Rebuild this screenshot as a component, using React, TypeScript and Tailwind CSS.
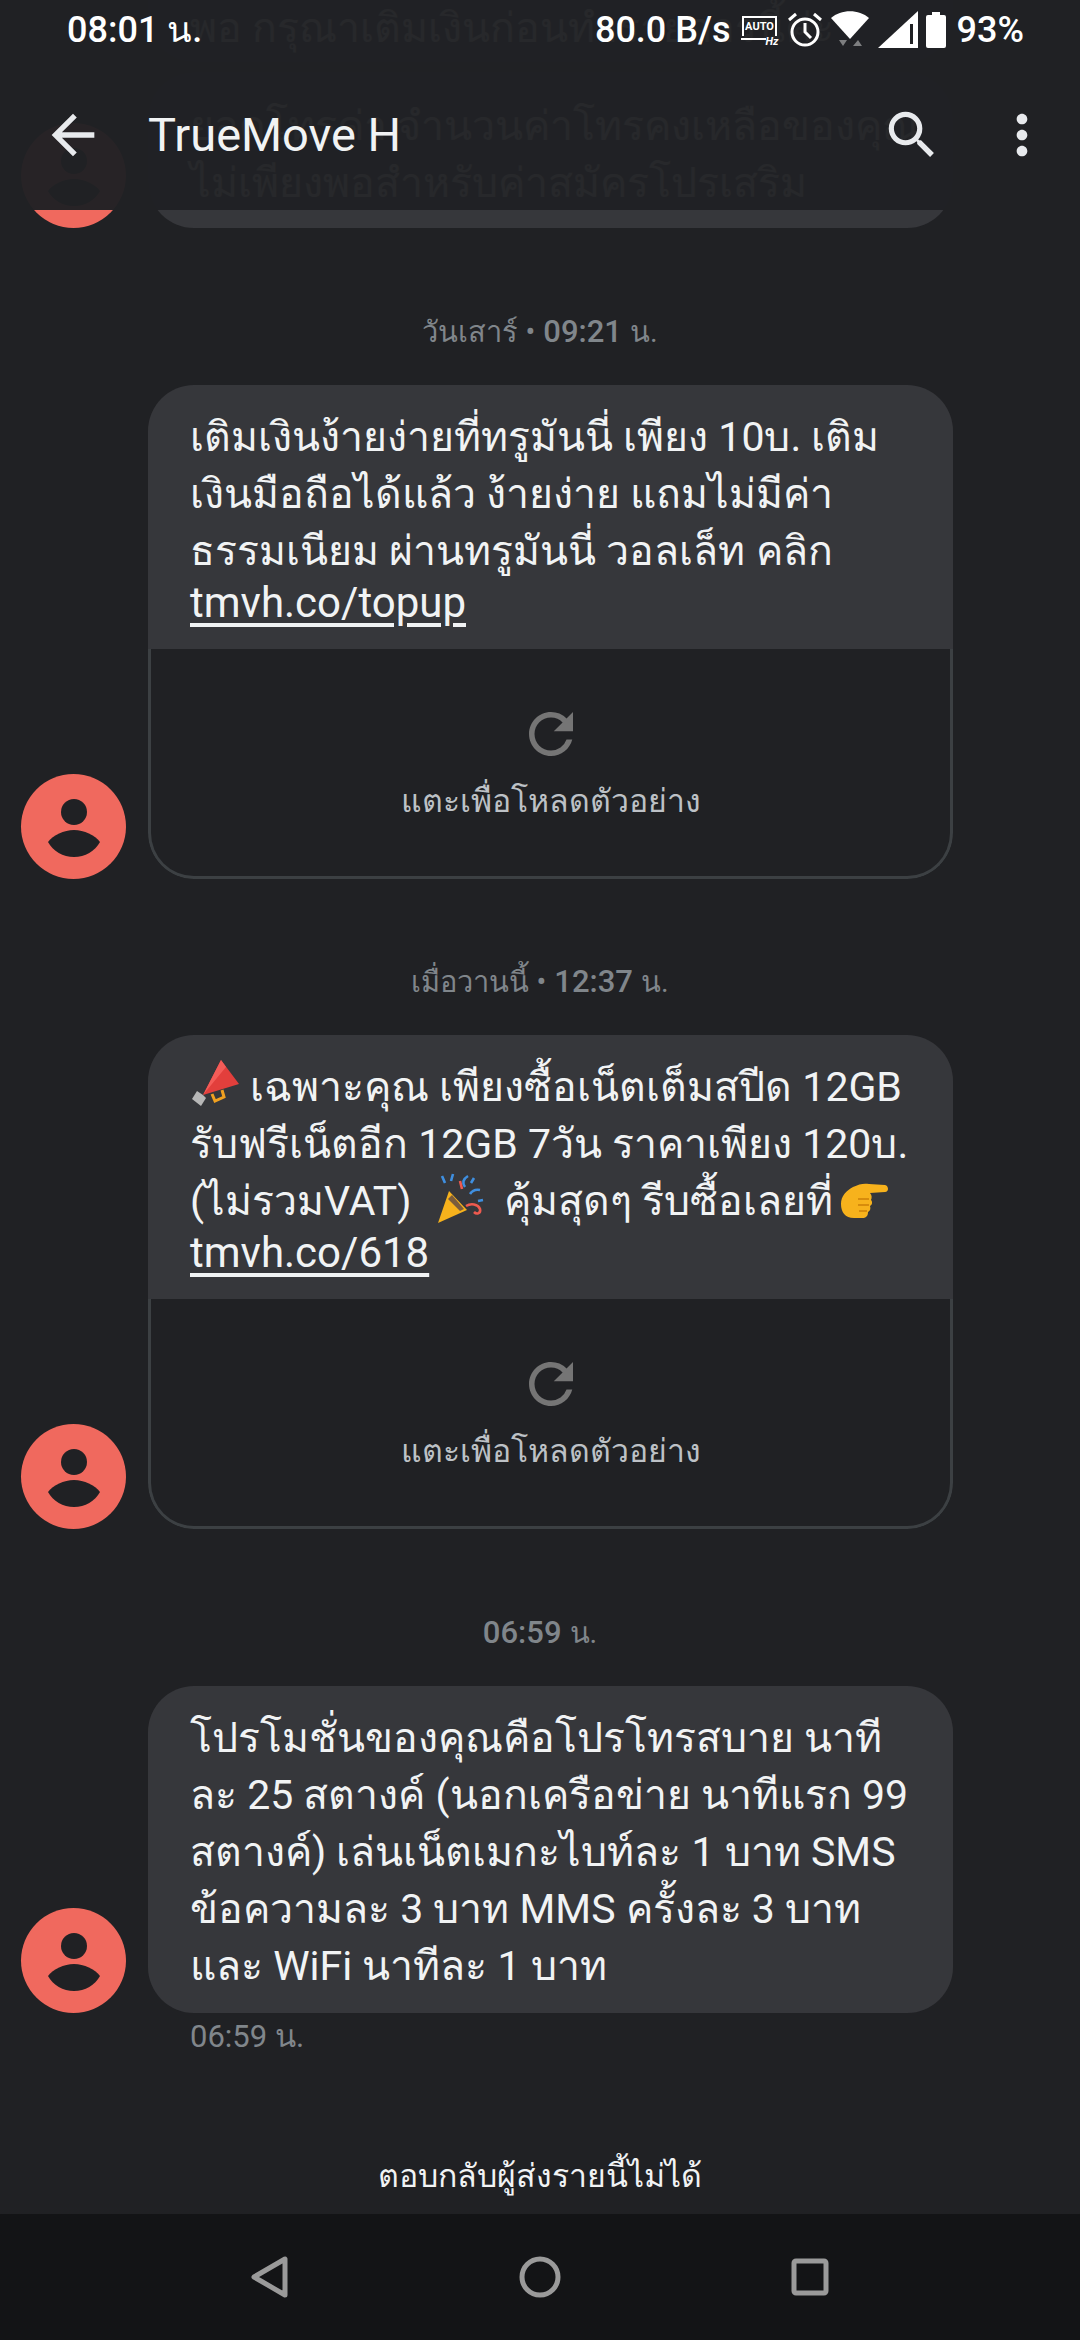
import { MdArrowBack, MdMoreVert, MdRefresh, MdSearch } from "react-icons/md";

function Avatar() {
  return (
    <div className="w-[105px] h-[105px] rounded-full bg-[#f0695e] shrink-0 flex flex-col items-center justify-center">
      <svg width="64" height="64" viewBox="0 0 64 64" fill="#202124">
        <circle cx="32" cy="17" r="13" />
        <path d="M32 35c-10 0-21 5-26 12 5 9 15 15 26 15s21-6 26-15c-5-7-16-12-26-12z" />
      </svg>
    </div>
  );
}

function Stamp({ label, time }: { label?: string; time: string }) {
  return (
    <div className="h-[57px] flex items-center justify-center text-[29px] text-[#80868b]">
      {label && <span className="mr-[8px]">{label} •</span>}
      <span className="font-medium text-[31px]">{time}</span>
      <span className="ml-[8px]">น.</span>
    </div>
  );
}

function Preview() {
  return (
    <div className="h-[230px] border-[3px] border-t-0 border-[#3c4043] rounded-b-[46px] flex flex-col items-center pt-[52px]">
      <MdRefresh size={66} className="text-[#757575]" />
      <div className="mt-[12px] text-[32px] leading-[44px] text-[#bdc1c6]">แตะเพื่อโหลดตัวอย่าง</div>
    </div>
  );
}

function Megaphone() {
  return (
    <svg width="50" height="50" viewBox="0 0 50 50" className="inline-block align-[-8px] mr-[10px]">
      <path d="M31 1 49 25 13 36z" fill="#e23f3c" />
      <path d="M31 1 36 8 17 31 13 36z" fill="#f45c58" />
      <path d="M13 36 7 32 2 40l9 7 5-8z" fill="#b7b7b7" />
      <path d="M22 35l3 7 9-4-2-7" fill="none" stroke="#f0a020" strokeWidth="3" />
    </svg>
  );
}

function Popper() {
  return (
    <svg width="50" height="52" viewBox="0 0 50 52" className="inline-block align-[-10px] ml-[24px] mr-[18px]">
      <path d="M13 18 31 37 2 50z" fill="#f7b21c" />
      <path d="M16 22l-4 4 12 12 4-2z" fill="#7a5c3c" />
      <path d="M6 3l3 7M17 1l-2 7M32 3c-5 3-6 7-3 11M44 17c-5-1-8 1-10 4M38 5l-3 5M47 27l-5 1" fill="none" stroke="#3f8fe0" strokeWidth="2.6" />
      <path d="M24 8l2 8M30 33c5-3 12-2 14 3 1 4-3 6-6 3" fill="none" stroke="#ee5a4f" strokeWidth="2.6" />
    </svg>
  );
}

function PointingHand() {
  return (
    <svg width="50" height="38" viewBox="0 0 50 38" className="inline-block align-[-4px] ml-[6px]">
      <path d="M14 6c6-3 11-4 16-3l16 1c4 1 4 7 0 7l-15 1c2 2 2 5 1 7 2 2 1 5-1 6 1 3 0 5-2 6 0 4-2 6-6 6h-8C6 37 2 31 2 23 2 15 7 10 14 6z" fill="#f7b21c" />
      <path d="M30 18H19M30 24H19M28 30H20" stroke="#d78c0c" strokeWidth="2" fill="none" />
    </svg>
  );
}

function AutoHz() {
  return (
    <svg width="40" height="34" viewBox="0 0 40 34" fill="none" className="shrink-0">
      <path d="M3 23V4h33v19M1 26h25" stroke="white" strokeWidth="2" />
      <text x="19.5" y="17" textAnchor="middle" fontSize="11" fontWeight="700" fill="white">AUTO</text>
      <text x="32" y="32" textAnchor="middle" fontSize="11" fontWeight="700" fontStyle="italic" fill="white">Hz</text>
    </svg>
  );
}

function Alarm() {
  return (
    <svg width="36" height="36" viewBox="0 0 36 36" fill="none" stroke="white" strokeWidth="3" className="shrink-0">
      <circle cx="18" cy="20" r="13" />
      <path d="M18 11v9l6 6M2 8l7-6M34 8l-7-6" />
    </svg>
  );
}

function Wifi() {
  return (
    <svg width="40" height="40" viewBox="0 0 40 40" className="shrink-0">
      <path d="M1 8C11-1 29-1 39 8L20 29z" fill="white" />
      <path d="M9 30h8l-4 6zM23 36h9l-4-6z" fill="#7d7e80" />
    </svg>
  );
}

function Signal() {
  return (
    <svg width="42" height="40" viewBox="0 0 42 40" className="shrink-0">
      <path d="M41 1v37H1z" fill="white" />
      <path d="M33 14h3v20h-3z" fill="#202124" />
    </svg>
  );
}

function Battery() {
  return (
    <svg width="20" height="36" viewBox="0 0 20 36" className="shrink-0">
      <path d="M6 0h8v3h4a2 2 0 0 1 2 2v29a2 2 0 0 1-2 2H2a2 2 0 0 1-2-2V5a2 2 0 0 1 2-2h4z" fill="white" />
    </svg>
  );
}

function Bubble({ children, preview }: { children: React.ReactNode; preview?: boolean }) {
  return (
    <div className="flex items-end pl-[21px]">
      <Avatar />
      <div className="ml-[22px] w-[805px] rounded-[46px] overflow-hidden">
        <div className="bg-[#36373b] pl-[42px] pt-[24px] pb-[18px] text-[41px] leading-[57px] text-[#f1f3f4] whitespace-nowrap">
          {children}
        </div>
        {preview && <Preview />}
      </div>
    </div>
  );
}

function LinkLine({ children }: { children: React.ReactNode }) {
  return <div className="mb-[6px] text-[42px] leading-[45px] underline underline-offset-[6px]">{children}</div>;
}

export default function App() {
  return (
    <div className="relative w-[1080px] h-[2340px] overflow-hidden bg-[#202124] font-['Roboto','Noto_Sans',sans-serif] flex flex-col">
      <main className="flex-1 overflow-hidden">
        <div className="-mt-[42px] ml-[148px] w-[805px] h-[104px] pl-[42px] pt-[42px] bg-[#36373b] rounded-b-[46px] text-[41px] leading-[57px] text-[#f1f3f4] whitespace-nowrap">
          พอ กรุณาเติมเงินก่อนทำรายการนี้ค่ะ
        </div>
        <div className="mt-[10px] flex items-end pl-[21px]">
          <Avatar />
          <div className="ml-[22px] w-[805px] h-[156px] rounded-[46px] bg-[#36373b] pl-[42px] pt-[26px] text-[41px] leading-[57px] text-[#f1f3f4] whitespace-nowrap">
            <div>ยอดโทรค่า จำนวนค่าโทรคงเหลือของคุณ</div>
            <div>ไม่เพียงพอสำหรับค่าสมัครโปรเสริม</div>
          </div>
        </div>

        <div className="mt-[76px]"><Stamp label="วันเสาร์" time="09:21" /></div>
        <div className="mt-[24px]">
          <Bubble preview>
            <div>เติมเงินง้ายง่ายที่ทรูมันนี่ เพียง 10บ. เติม</div>
            <div>เงินมือถือได้แล้ว ง้ายง่าย แถมไม่มีค่า</div>
            <div>ธรรมเนียม ผ่านทรูมันนี่ วอลเล็ท คลิก</div>
            <LinkLine>tmvh.co/topup</LinkLine>
          </Bubble>
        </div>

        <div className="mt-[75px]"><Stamp label="เมื่อวานนี้" time="12:37" /></div>
        <div className="mt-[24px]">
          <Bubble preview>
            <div><Megaphone />เฉพาะคุณ เพียงซื้อเน็ตเต็มสปีด 12GB</div>
            <div>รับฟรีเน็ตอีก 12GB 7วัน ราคาเพียง 120บ.</div>
            <div>(ไม่รวมVAT)<Popper />คุ้มสุดๆ รีบซื้อเลยที่<PointingHand /></div>
            <LinkLine>tmvh.co/618</LinkLine>
          </Bubble>
        </div>

        <div className="mt-[76px]"><Stamp time="06:59" /></div>
        <div className="mt-[24px]">
          <Bubble>
            <div>โปรโมชั่นของคุณคือโปรโทรสบาย นาที</div>
            <div>ละ 25 สตางค์ (นอกเครือข่าย นาทีแรก 99</div>
            <div>สตางค์) เล่นเน็ตเมกะไบท์ละ 1 บาท SMS</div>
            <div>ข้อความละ 3 บาท MMS ครั้งละ 3 บาท</div>
            <div>และ WiFi นาทีละ 1 บาท</div>
          </Bubble>
        </div>
        <div className="ml-[190px] mt-[4px] text-[31px] leading-[40px] text-[#80868b]">06:59 น.</div>
      </main>

      <div className="h-[76px] flex items-center justify-center bg-[#202124] text-[32px] text-[#f1f3f4]">
        ตอบกลับผู้ส่งรายนี้ไม่ได้
      </div>

      <nav className="h-[126px] bg-[#131416] flex items-center justify-center gap-[230px]">
        <svg width="38" height="42" viewBox="0 0 38 42" fill="none" stroke="#9a9a9a" strokeWidth="5" strokeLinejoin="round">
          <path d="M34 3v36L3 21z" />
        </svg>
        <svg width="42" height="42" viewBox="0 0 42 42" fill="none" stroke="#9a9a9a" strokeWidth="5">
          <circle cx="21" cy="21" r="18" />
        </svg>
        <svg width="38" height="38" viewBox="0 0 38 38" fill="none" stroke="#9a9a9a" strokeWidth="5" strokeLinejoin="round">
          <rect x="3" y="3" width="32" height="32" rx="2" />
        </svg>
      </nav>

      <header className="absolute top-0 left-0 w-full h-[210px] bg-[#202124]/[0.97] text-white">
        <div className="h-[60px] flex items-center pl-[67px] pr-[56px]">
          <span className="text-[36px] font-medium">08:01 น.</span>
          <span className="ml-auto text-[36px] font-medium">80.0 B/s</span>
          <div className="ml-[9px] flex items-center gap-[7px]">
            <AutoHz />
            <Alarm />
            <Wifi />
            <Signal />
            <Battery />
          </div>
          <span className="ml-[11px] text-[36px] font-medium">93%</span>
        </div>
        <div className="h-[150px] flex items-center pl-[41px] pr-[26px]">
          <MdArrowBack size={64} className="text-[#e8eaed]" />
          <span className="ml-[43px] text-[47px] text-[#f1f3f4]">TrueMove H</span>
          <MdSearch size={62} className="ml-auto text-[#e8eaed]" />
          <MdMoreVert size={64} className="ml-[47px] text-[#e8eaed]" />
        </div>
      </header>
    </div>
  );
}
